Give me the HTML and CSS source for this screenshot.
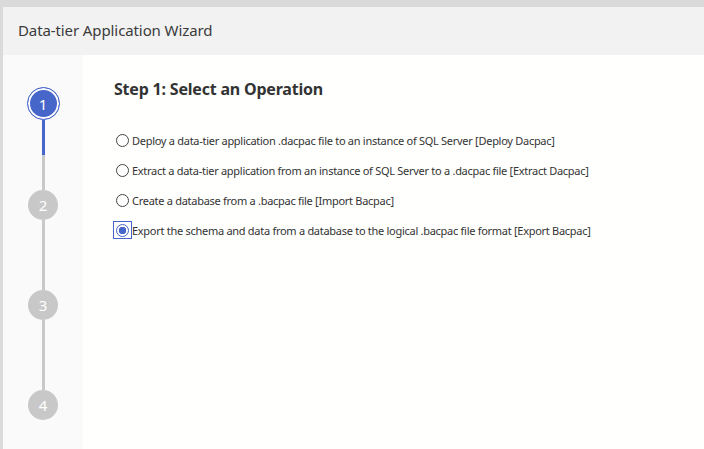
FILE: index.html
```html
<!DOCTYPE html>
<html>
<head>
<meta charset="utf-8">
<link rel="stylesheet" href="styles.css">
</head>
<body>
<div class="backdrop">
  <div class="edge"></div>
  <div class="dialog">
    <div class="header">Data-tier Application Wizard</div>
    <div class="body">
      <div class="sidebar">
        <div class="step active"><span>1</span></div>
        <div class="connector progress"></div>
        <div class="step"><span>2</span></div>
        <div class="connector"></div>
        <div class="step"><span>3</span></div>
        <div class="connector"></div>
        <div class="step"><span>4</span></div>
      </div>
      <div class="content">
        <h1 class="title">Step 1: Select an Operation</h1>
        <div class="options">
          <label class="option"><span class="radio"></span><span class="label">Deploy a data-tier application .dacpac file to an instance of SQL Server [Deploy Dacpac]</span></label>
          <label class="option"><span class="radio"></span><span class="label">Extract a data-tier application from an instance of SQL Server to a .dacpac file [Extract Dacpac]</span></label>
          <label class="option"><span class="radio"></span><span class="label">Create a database from a .bacpac file [Import Bacpac]</span></label>
          <label class="option selected"><span class="focus"><span class="radio"></span></span><span class="label">Export the schema and data from a database to the logical .bacpac file format [Export Bacpac]</span></label>
        </div>
      </div>
    </div>
  </div>
</div>
</body>
</html>
```
FILE: styles.css
```css
* { box-sizing: border-box; }
html, body { margin: 0; padding: 0; }
body {
  width: 704px;
  height: 449px;
  overflow: hidden;
  background: #dadada;
  font-family: "Noto Sans", "Open Sans", sans-serif;
  color: #333333;
}
.backdrop {
  display: flex;
  padding-top: 7px;
  height: 449px;
}
.edge {
  width: 3px;
  flex: none;
  background: #dadada;
}
.dialog {
  flex: 1;
  display: flex;
  flex-direction: column;
  background: #fffffd;
}
.header {
  height: 48px;
  flex: none;
  background: #f2f2f2;
  padding-left: 15px;
  display: flex;
  align-items: center;
  font-size: 15px;
  letter-spacing: -0.1px;
  color: #3b3b3b;
  padding-bottom: 2px;
}
.body {
  flex: 1;
  display: flex;
}
.sidebar {
  width: 80px;
  flex: none;
  background: #fafafa;
  display: flex;
  flex-direction: column;
  align-items: center;
  padding-top: 32px;
}
.step {
  width: 30px;
  height: 30px;
  border-radius: 50%;
  background: #c8c8c8;
  color: #ffffff;
  font-size: 15px;
  display: flex;
  align-items: center;
  justify-content: center;
  flex: none;
}
.step.active {
  width: 33px;
  height: 33px;
  background: #4766c9;
  border: 1px solid #4766c9;
  box-shadow: inset 0 0 0 2px #ffffff;
}
.connector {
  width: 3px;
  height: 70px;
  background: #c8c8c8;
  flex: none;
}
.connector.progress {
  background: linear-gradient(#4766c9 0 35px, #c8c8c8 35px);
}
.content {
  flex: 1;
  padding: 23px 0 0 31px;
}
.title {
  margin: 0;
  font-size: 16px;
  font-weight: 700;
  letter-spacing: -0.2px;
  color: #333333;
  line-height: 22px;
}
.options {
  display: flex;
  flex-direction: column;
  gap: 12px;
  margin-top: 31px;
}
.option {
  display: flex;
  align-items: center;
  height: 18px;
  font-size: 11px;
  letter-spacing: -0.28px;
  color: #333333;
}
.radio {
  width: 13px;
  height: 13px;
  border-radius: 50%;
  border: 1px solid #444444;
  margin-left: 2px;
  margin-right: 3px;
  flex: none;
  background: #ffffff;
}
.focus {
  display: flex;
  align-items: center;
  justify-content: center;
  width: 19px;
  height: 18px;
  margin-left: -1px;
  margin-right: 0;
  border: 1px solid #4766c9;
}
.focus .radio {
  margin: 0;
  border-color: #4766c9;
  background: radial-gradient(circle, #4766c9 0 3.5px, #ffffff 4px);
}
```
